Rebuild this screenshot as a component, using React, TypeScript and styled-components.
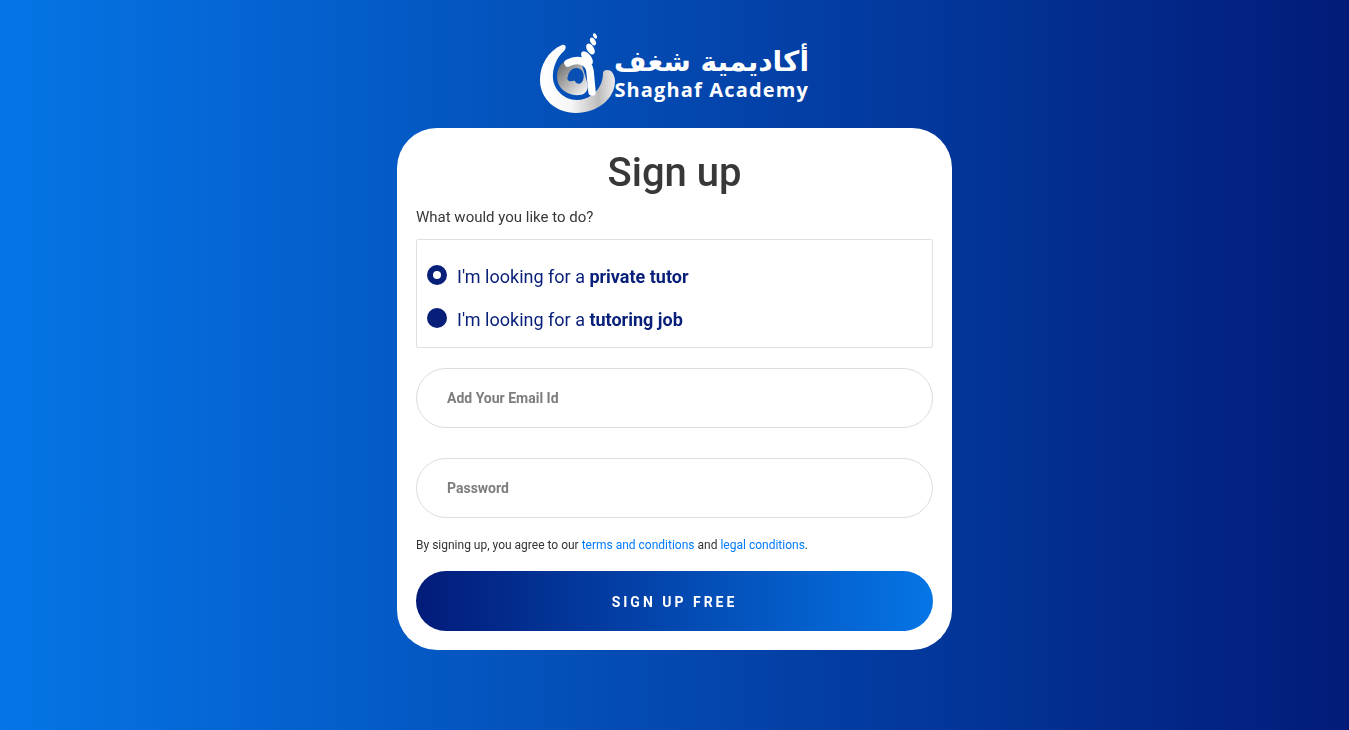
import React from 'react';
import styled, { createGlobalStyle } from 'styled-components';

const GlobalStyle = createGlobalStyle`
  html, body {
    margin: 0;
    padding: 0;
    height: 100%;
  }
  body {
    font-family: Roboto, "Liberation Sans", sans-serif;
  }
  * {
    box-sizing: border-box;
  }
`;

const Page = styled.div`
  height: 730px;
  padding-top: 33px;
  display: flex;
  flex-direction: column;
  align-items: center;
  background: linear-gradient(to right, #0575e6, #021b79);
  overflow: hidden;
`;

const Logo = styled.div`
  width: 269px;
  height: 80px;
  margin-bottom: 15px;
  display: flex;
  align-items: flex-start;
`;

const LogoMark = styled.svg`
  width: 75px;
  height: 80px;
  flex: none;
`;

const LogoText = styled.div`
  flex: 1;
  min-width: 0;
  color: #fff;
  display: flex;
  flex-direction: column;
  align-items: flex-end;
  margin-top: 13px;
`;

const LogoArabic = styled.div`
  font-family: "DejaVu Sans", sans-serif;
  font-size: 28px;
  font-weight: 700;
  line-height: 32px;
  height: 32px;
  white-space: nowrap;
  direction: rtl;
`;

const LogoLatin = styled.div`
  font-family: "Open Sans", sans-serif;
  font-size: 20px;
  font-weight: 700;
  line-height: 24px;
  letter-spacing: 1.15px;
  white-space: nowrap;
`;

const Card = styled.div`
  width: 555px;
  height: 522px;
  padding: 19px;
  background: #fff;
  border-radius: 40px;
  will-change: transform;
`;

const Title = styled.h1`
  margin: 1px 0 8px;
  color: #383838;
  font-size: 40px;
  font-weight: 500;
  line-height: 50px;
  text-align: center;
`;

const Prompt = styled.p`
  margin: 0 0 11px;
  color: #383838;
  font-size: 15px;
  line-height: 22px;
`;

const RoleBox = styled.div`
  height: 109px;
  margin-bottom: 20px;
  padding: 21px 10px 0;
  border: 1px solid #e0e0e0;
  border-radius: 2px;
  display: flex;
  flex-direction: column;
  gap: 11px;
`;

const RoleRow = styled.label`
  height: 32px;
  display: flex;
  align-items: center;
  gap: 10px;
  color: #071f78;
  font-size: 18px;
  line-height: 32px;

  b {
    font-weight: 700;
  }
`;

const RoleDot = styled.span<{ $checked?: boolean }>`
  width: 20px;
  height: 20px;
  flex: none;
  margin-top: -5px;
  border-radius: 50%;
  background: ${props => (props.$checked ? '#fff' : '#071f78')};
  border: ${props => (props.$checked ? '6px solid #071f78' : 'none')};
`;

const Field = styled.input`
  display: block;
  width: 100%;
  height: 60px;
  margin-bottom: 30px;
  padding: 0 30px;
  border: 1px solid #ddd;
  border-radius: 30px;
  outline: none;
  background: #fff;
  font-family: inherit;
  font-size: 14px;
  font-weight: 700;

  &::placeholder {
    color: #7d7d7d;
    opacity: 1;
  }
`;

const Terms = styled.p`
  margin: -12px 0 17px;
  color: #333;
  font-size: 12px;
  line-height: 18px;

  a {
    color: #007bff;
    text-decoration: none;
  }
`;

const SubmitButton = styled.button`
  display: block;
  width: 100%;
  height: 60px;
  padding: 2px 0 0;
  border: none;
  border-radius: 30px;
  background: linear-gradient(to right, #021b79, #0575e6);
  color: #fff;
  font-family: inherit;
  font-size: 14px;
  font-weight: 700;
  letter-spacing: 3px;
  text-transform: uppercase;
`;

const ShaghafMark = () => (
  <LogoMark viewBox="0 0 75 80">
    <defs>
      <linearGradient id="swoosh" x1="0" y1="0" x2="1" y2="0">
        <stop offset="0" stopColor="#ffffff" />
        <stop offset="0.42" stopColor="#f6f6f6" />
        <stop offset="0.78" stopColor="#bcbcbc" />
        <stop offset="1" stopColor="#ececec" />
      </linearGradient>
      <linearGradient id="inner" x1="0.05" y1="0.1" x2="0.9" y2="0.95">
        <stop offset="0" stopColor="#6f6f6f" />
        <stop offset="0.5" stopColor="#b2b2b2" />
        <stop offset="1" stopColor="#f2f2f2" />
      </linearGradient>
    </defs>
    {/* crescent */}
    <path
      d="M22 12 C8 18 0 32 0 47 C0 66 16 80 36 80 C57 80 75 66 75 48 C75 44 73 40 71 38 C67 36 63 37 63 40 C63 48 60 56 52 62 C44 68 34 68 27 65 C19 61 14 54 13 46 C12 35 17 24 24 18 C27 15 26 11 22 12 Z"
      fill="url(#swoosh)"
    />
    {/* inner disc */}
    <path
      d="M24 29 C17 33 16 43 18 50 C21 58 30 63 40 62 C47 61 49 55 47 49 L42 32 C36 28 29 27 24 29 Z"
      fill="url(#inner)"
    />
    {/* hole of the letter */}
    <path
      d="M28 43 C29 37 35 33 40 36 C44 38 45 45 42 49 C40 52 36 51 35 48 C33 47 31 49 29 48 C27 47 27 45 28 43 Z"
      fill="#0a4fb4"
    />
    {/* stem */}
    <path
      d="M28 30 C38 25 48.5 28 50 38 L52 59"
      fill="none"
      stroke="#fff"
      strokeWidth="7.5"
      strokeLinecap="round"
    />
    {/* shell whorls */}
    <ellipse cx="47" cy="25" rx="8" ry="4.2" transform="rotate(52 47 25)" fill="#fff" />
    <ellipse cx="50.5" cy="16" rx="6" ry="3.5" transform="rotate(58 50.5 16)" fill="#fff" />
    <ellipse cx="53" cy="8.5" rx="4.2" ry="2.5" transform="rotate(60 53 8.5)" fill="#fff" />
    <ellipse cx="55" cy="3" rx="2.8" ry="1.7" transform="rotate(60 55 3)" fill="#fff" />
  </LogoMark>
);

export default function App() {
  return (
    <Page>
      <GlobalStyle />
      <Logo>
        <ShaghafMark />
        <LogoText>
          <LogoArabic>أكاديمية شغف</LogoArabic>
          <LogoLatin>Shaghaf Academy</LogoLatin>
        </LogoText>
      </Logo>
      <Card>
        <Title>Sign up</Title>
        <Prompt>What would you like to do?</Prompt>
        <RoleBox>
          <RoleRow>
            <RoleDot $checked />
            <span>
              I'm looking for a <b>private tutor</b>
            </span>
          </RoleRow>
          <RoleRow>
            <RoleDot />
            <span>
              I'm looking for a <b>tutoring job</b>
            </span>
          </RoleRow>
        </RoleBox>
        <Field type="email" placeholder="Add Your Email Id" />
        <Field type="password" placeholder="Password" />
        <Terms>
          By signing up, you agree to our <a href="#terms">terms and conditions</a> and{' '}
          <a href="#legal">legal conditions</a>.
        </Terms>
        <SubmitButton type="button">Sign up free</SubmitButton>
      </Card>
    </Page>
  );
}
